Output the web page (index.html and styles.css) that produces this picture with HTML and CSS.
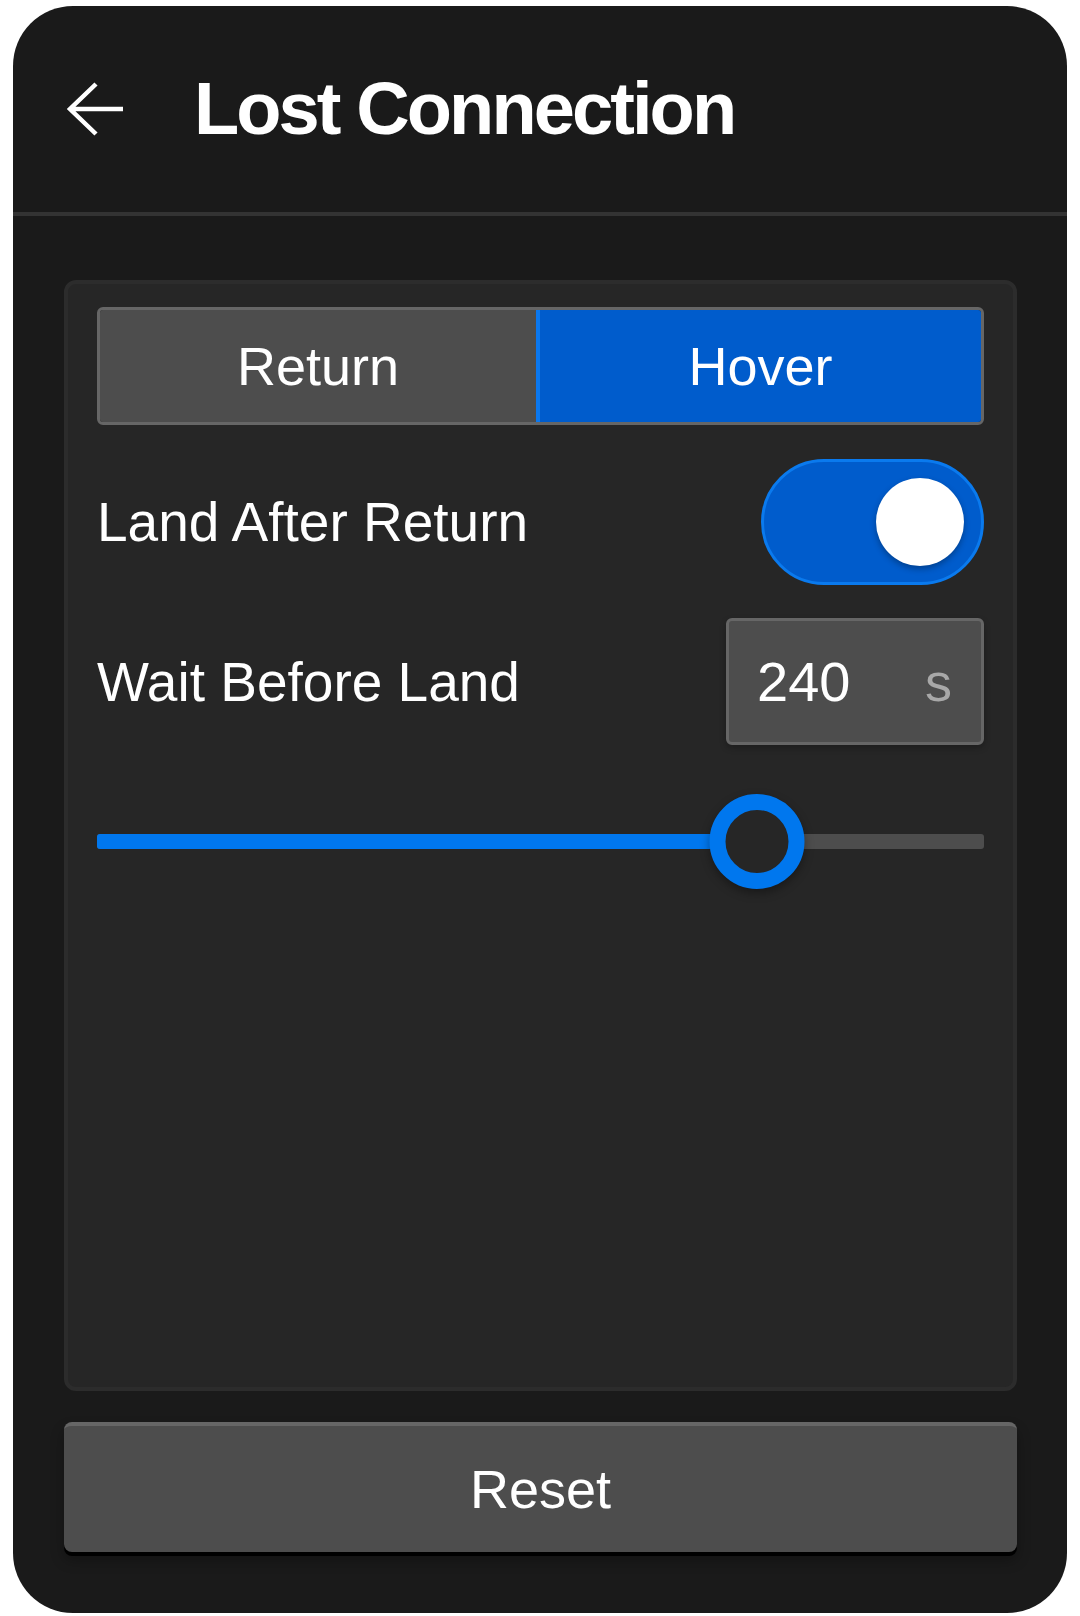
FILE: index.html
```html
<!DOCTYPE html>
<html lang="en">
<head>
    <meta charset="UTF-8">
    <meta name="viewport" content="width=device-width, initial-scale=1.0">
    <title>Lost Connection</title>
    <link rel="stylesheet" href="styles.css">
</head>
<body>
  <div class="device">
    <div class="header">
        <a class="back-btn" href="#">
            <svg width="60" height="56" viewBox="0 0 60 56">
                <path d="M57 27H4M30 2L4 27L30 52" fill="none" stroke="#ffffff" stroke-width="4.5"/>
            </svg>
        </a>
        <h1 class="page-title">Lost Connection</h1>
    </div>

    <div class="content">
        <div class="panel">
            <div class="segmented">
                <div class="segment">Return</div>
                <div class="segment active">Hover</div>
            </div>

            <div class="setting-row row-toggle">
                <span class="setting-label">Land After Return</span>
                <div class="toggle on">
                    <div class="toggle-knob"></div>
                </div>
            </div>

            <div class="setting-row row-input">
                <span class="setting-label">Wait Before Land</span>
                <div class="num-input">
                    <span class="num-value">240</span>
                    <span class="num-unit">s</span>
                </div>
            </div>

            <div class="slider">
                <div class="slider-track">
                    <div class="slider-fill" style="width: 74.4%"></div>
                </div>
                <div class="slider-thumb" style="left: 74.4%"></div>
            </div>
        </div>

        <button class="reset-btn">Reset</button>
    </div>
  </div>
</body>
</html>
```

FILE: styles.css
```css
* {
    box-sizing: border-box;
}

body {
    margin: 0;
    background: #ffffff;
    font-family: "Liberation Sans", Arial, sans-serif;
    color: #ffffff;
}

.device {
    margin: 6px 13px 3px 13px;
    height: 1607px;
    background: #1a1a1a;
    border-radius: 60px;
    display: flex;
    flex-direction: column;
    overflow: hidden;
}

.header {
    height: 210px;
    flex-shrink: 0;
    display: flex;
    align-items: center;
    padding-left: 53px;
    border-bottom: 4px solid #333333;
}

.back-btn {
    display: flex;
    width: 60px;
    height: 56px;
    margin-top: 2px;
}

.page-title {
    margin: 0 0 0 68px;
    font-size: 74px;
    line-height: 1;
    font-weight: 700;
    letter-spacing: -2.9px;
}

.content {
    padding: 64px 50px 0 51px;
    display: flex;
    flex-direction: column;
    gap: 31px;
}

.panel {
    position: relative;
    height: 1111px;
    background: #262626;
    border: 4px solid #2c2c2c;
    border-radius: 12px;
    padding: 23px 29px 0 29px;
}

.segmented {
    height: 118px;
    display: grid;
    grid-template-columns: 436px 1fr;
    border: 3px solid #666666;
    border-radius: 6px;
    overflow: hidden;
}

.segment {
    display: flex;
    align-items: center;
    justify-content: center;
    background: #4d4d4d;
    font-size: 54px;
}

.segment.active {
    background: #005ccc;
    border-left: 4px solid #0a78f0;
}

.setting-row {
    display: flex;
    align-items: center;
    justify-content: space-between;
}

.row-toggle {
    margin-top: 34px;
}

.row-input {
    margin-top: 33px;
}

.setting-label {
    font-size: 55px;
}

.toggle {
    width: 223px;
    height: 126px;
    border-radius: 63px;
    border: 3px solid #0a7aee;
    background: #005ccc;
    display: flex;
    align-items: center;
    justify-content: flex-end;
    padding-right: 17px;
}

.toggle-knob {
    width: 88px;
    height: 88px;
    border-radius: 50%;
    background: #ffffff;
    box-shadow: 0 3px 6px rgba(0, 0, 0, 0.3);
}

.num-input {
    width: 258px;
    height: 127px;
    border: 3px solid #666666;
    border-radius: 6px;
    background: #4d4d4d;
    display: flex;
    align-items: center;
    justify-content: space-between;
    padding: 0 29px 0 28px;
    box-shadow: 0 3px 6px rgba(0, 0, 0, 0.25);
}

.num-value {
    font-size: 56px;
}

.num-unit {
    font-size: 54px;
    color: #a8a8a8;
}

.slider {
    position: relative;
    margin-top: 49px;
    height: 95px;
    display: flex;
    align-items: center;
}

.slider-track {
    width: 100%;
    height: 15px;
    border-radius: 3px;
    background: #4d4d4d;
    overflow: hidden;
}

.slider-fill {
    height: 100%;
    background: #0077ee;
}

.slider-thumb {
    position: absolute;
    top: 0;
    width: 95px;
    height: 95px;
    border: 16px solid #0077ee;
    border-radius: 50%;
    background: #262626;
    transform: translateX(-50%);
    box-shadow: 0 4px 10px rgba(0, 0, 0, 0.35);
}

.reset-btn {
    height: 130px;
    border: none;
    border-top: 4px solid #666666;
    border-radius: 8px;
    background: #4d4d4d;
    color: #ffffff;
    font-family: "Liberation Sans", Arial, sans-serif;
    font-size: 54px;
    box-shadow: 0 4px 0 #000000, 0 8px 14px rgba(0, 0, 0, 0.3);
    padding: 0;
}
```
